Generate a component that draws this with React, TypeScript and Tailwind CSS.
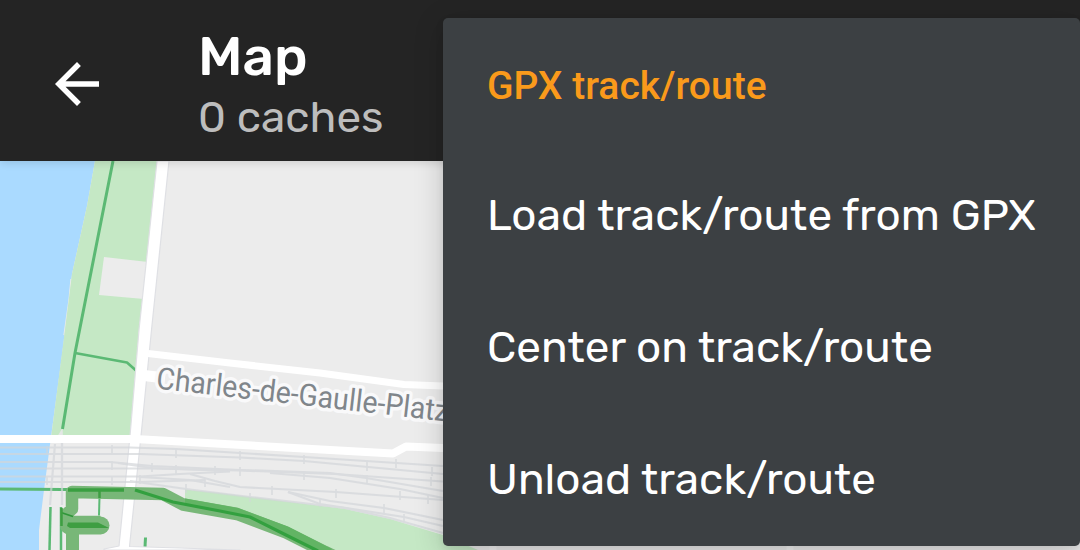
const menuItems = ["Load track/route from GPX", "Center on track/route", "Unload track/route"];

function BackIcon() {
  return (
    <svg viewBox="0 0 24 24" className="size-[66px] shrink-0 fill-white" aria-hidden="true">
      <path d="M20 11H7.83l5.59-5.59L12 4l-8 8 8 8 1.41-1.41L7.83 13H20v-2z" />
    </svg>
  );
}

function TopBar() {
  return (
    <header className="relative z-10 flex h-[161px] shrink-0 items-start bg-[#242424] shadow-[0_2px_8px_rgba(0,0,0,0.12)]">
      <button className="ml-[44px] mt-[51px]" aria-label="Back">
        <BackIcon />
      </button>
      <div className="ml-[88px] pt-[26px]">
        <h1 className="text-[55px] font-medium leading-[62px] text-white">Map</h1>
        <p className="text-[44px] leading-[58px] text-[#bdbdbd]">0 caches</p>
      </div>
    </header>
  );
}

const rails = [
  "M0 447.500H130L176 449L240 453L304 457L443 466",
  "M0 454H140L240 457.500L304 461L443 474",
  "M0 462H110L152 466L240 470L330 473L366 478L443 491",
  "M0 468.500H152L240 470.500L335 474L443 481.500",
  "M118 463L152 468L230 471",
  "M270 473L330 478L400 489L443 498",
  "M0 476.500H140L180 474L230 471.500",
  "M0 482H140L205 480",
  "M190 474L215 481L240 487L336 492L443 500",
  "M140 477L190 480L230 487",
  "M130 481L186 489L250 497L345 508L390 518L443 533",
  "M288 492L330 501L384 508L443 520",
  "M288 492L320 504L404 517L443 526",
  "M55 444L50 505",
  "M62 438V505",
];

const ticks = [
  [112, 449], [112, 465], [112, 480], [47, 450], [47, 480], [176, 453], [176, 469],
  [152, 467], [140, 479], [205, 482], [215, 470], [240, 455], [240, 471],
  [186, 488], [250, 497], [272, 490], [304, 459], [304, 475], [336, 493],
  [367, 466], [367, 479], [320, 502], [396, 463], [384, 508], [404, 518],
  [400, 495], [432, 471], [431, 481], [428, 499],
];

function MapView() {
  return (
    <svg
      viewBox="0 161 1080 389"
      className="h-[389px] w-full shrink-0"
      fill="none"
      strokeLinejoin="round"
      aria-hidden="true"
    >
      <rect y="161" width="1080" height="389" fill="#ececec" />
      <path d="M0 161H95L87 206L72 274L62 355L51 437L44 490L39 530V550H0Z" fill="#aadaff" />
      <path d="M71 279L69 300L64 335" stroke="#ececec" strokeWidth="1.200" />
      <path d="M95 161H158L139 330L130 438H51L63 345L72 274L87 206Z" fill="#c5e8c5" />
      <path d="M104 257L148 262L144 299L99 295Z" fill="#ececec" />
      <path d="M62.500 428L57 437H63Z" fill="#e3e7e5" />
      <path d="M185 489.500L220 493L290 502L345 509L390 519L443 535L478 550H328L270 523L185 502Z" fill="#c5e8c5" />

      <g stroke="#5bb974">
        <path d="M113 161L75 353L62.500 429" strokeWidth="3" />
        <path d="M75 353L127 362.500L136 370.500" strokeWidth="2.600" />
        <path d="M50.500 507L49.500 550" strokeWidth="2.500" />
        <path d="M61 507V550" strokeWidth="2.500" />
        <path d="M99.700 490L99 515.500" strokeWidth="2" />
        <path d="M145.500 537.500L145 547" strokeWidth="3" />
        <path d="M0 489L125 490" strokeWidth="3" />
      </g>

      <path
        d="M157 161L139 330L130 436L119 546L104 549V550H240L180 548L129.500 546.500L141 436L151.500 330L169 161Z"
        fill="#fff"
        stroke="#dfe0e4"
        strokeWidth="1.200"
      />
      <g stroke="#d3d6da" strokeWidth="2.200" opacity=".7">
        {rails.map((d) => (
          <path key={d} d={d} />
        ))}
        {ticks.map(([x, y]) => (
          <path key={`${x}-${y}`} d={`M${x} ${y - 4}v9`} strokeWidth="1.600" />
        ))}
      </g>
      <g stroke="#fff">
        <path d="M148 353.500L230 363L320 373L404 384.500L443 386" strokeWidth="7" />
        <path d="M144 375.500L165 378" strokeWidth="11" />
        <path d="M0 439H135L393 453.500L406 446.500L443 448" strokeWidth="8" />
      </g>

      <path
        d="M340 559L325 552L286 532.500L237 514L183 504.500L163 494L72 492V509L66.500 514V522H100.500"
        stroke="#78b778"
        strokeWidth="12.500"
      />
      <path d="M69 525.500H100.500" stroke="#78b778" strokeWidth="18" strokeLinecap="round" />
      <path d="M72.500 525V550" stroke="#78b778" strokeWidth="13" />
      <path d="M185 498.500L238 508L288 526.500L332 549L328 553L320 552L286 535L250 518L185 505Z" fill="#62b464" />
      <path d="M68 522.500H98L109 528L96 528H70L67 526Z" fill="#3e9e42" />
      <path d="M61 512.500L73 516.500" stroke="#2f963a" strokeWidth="1.800" />
      <path d="M61.500 508V526M99.500 491V498" stroke="#3e9e42" strokeWidth="2.500" />
      <path d="M68 490H124" stroke="#3a9f41" strokeWidth="3.500" />
      <path d="M135 490L173 502L220 511L250 517L284 534L318 551" stroke="#33a03f" strokeWidth="3.200" />

      <text
        transform="translate(155.500 388.500) rotate(6.450)"
        className="font-['Roboto',sans-serif] text-[30.500px]"
        textLength="294"
        lengthAdjust="spacingAndGlyphs"
        fill="#80868b"
        stroke="#f9f9fa"
        strokeWidth="7"
        paintOrder="stroke"
      >
        Charles-de-Gaulle-Platz
      </text>

      <path d="M493 546V550M790 546V550" stroke="#fff" strokeWidth="7" opacity=".4" />
    </svg>
  );
}

function TrackMenu() {
  return (
    <nav className="absolute left-[443px] top-[18px] z-20 flex h-[528px] w-[637px] flex-col rounded-[5px] bg-[#3c4043] pl-[44px] shadow-[0_6px_30px_rgba(0,0,0,0.18),0_3px_8px_rgba(0,0,0,0.08)]">
      <h2 className="flex h-[132px] items-center whitespace-nowrap pt-[4px] font-['Roboto',sans-serif] text-[39px] font-medium tracking-[0.04px] text-[#fa9a1b]">
        GPX track/route
      </h2>
      {menuItems.map((label) => (
        <button
          key={label}
          className="flex h-[132px] items-center whitespace-nowrap pb-[2px] text-[44px] tracking-[0.05px] text-white"
        >
          {label}
        </button>
      ))}
    </nav>
  );
}

export default function App() {
  return (
    <main className="relative flex h-[550px] w-[1080px] flex-col overflow-hidden bg-[#ececec] font-['Rubik','Roboto',sans-serif]">
      <TopBar />
      <MapView />
      <TrackMenu />
    </main>
  );
}
